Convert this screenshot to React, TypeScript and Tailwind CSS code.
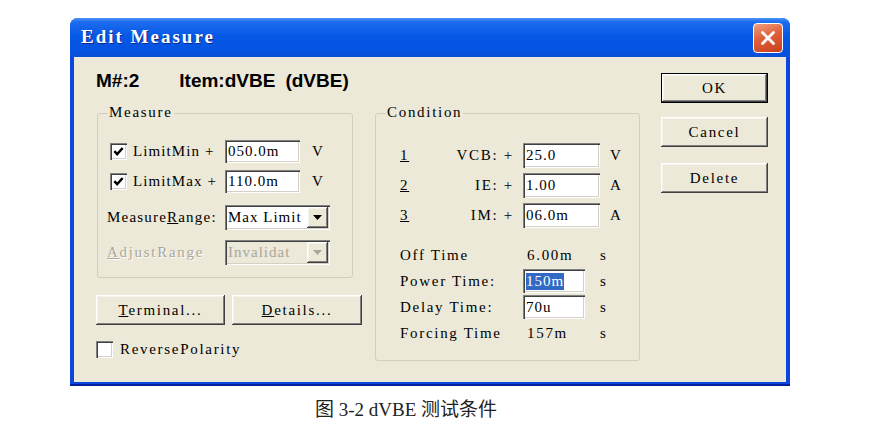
import type { ReactNode } from "react";

const DLG = "font-['Liberation_Serif','Times_New_Roman',serif] text-[15px] tracking-[1.7px]";
const SUNKEN =
  "shadow-[inset_1px_1px_0_#808080,inset_2px_2px_0_#404040,inset_-1px_-1px_0_#ffffff,inset_-2px_-2px_0_#d4d0c8]";
const RAISED =
  "shadow-[inset_-1px_-1px_0_#404040,inset_1px_1px_0_#ffffff,inset_-2px_-2px_0_#808080,inset_2px_2px_0_#f4f3ee]";

function CheckBox({ checked }: { checked?: boolean }) {
  return (
    <span className={`w-[17px] h-[17px] bg-white flex items-center justify-center shrink-0 ${SUNKEN}`}>
      {checked && (
        <svg width="11" height="11" viewBox="0 0 10 10">
          <path d="M1.2 4.6 L3.8 7.4 L8.8 1.8" stroke="#000" strokeWidth="2.2" fill="none" />
        </svg>
      )}
    </span>
  );
}

function Field({ value, className = "", selected }: { value: string; className?: string; selected?: boolean }) {
  return (
    <div className={`bg-white flex items-center pl-[3px] text-black tracking-[1px] ${SUNKEN} ${className}`}>
      {selected ? <span className="bg-[#316ac5] text-white leading-[17px]">{value}</span> : value}
    </div>
  );
}

function Combo({ value, disabled }: { value: string; disabled?: boolean }) {
  return (
    <div
      className={`w-[105px] h-[25px] flex items-center pl-[3px] pr-[2px] tracking-[1px] ${SUNKEN} ${
        disabled ? "bg-[#ece9d8] text-[#a9a79b]" : "bg-white text-black"
      }`}
    >
      <span className="flex-1 overflow-hidden whitespace-nowrap">{value}</span>
      <span className={`w-[21px] h-[21px] bg-[#ece9d8] flex items-center justify-center shrink-0 ${RAISED}`}>
        <svg width="9" height="5" viewBox="0 0 9 5">
          <polygon points="0,0 9,0 4.5,5" fill={disabled ? "#a9a79b" : "#000"} />
        </svg>
      </span>
    </div>
  );
}

function Button({ children, className = "", isDefault }: { children: ReactNode; className?: string; isDefault?: boolean }) {
  return (
    <div className={`h-[30px] ${isDefault ? "border border-black" : ""} ${className}`}>
      <div className={`w-full h-full bg-[#ece9d8] flex items-center justify-center text-black ${RAISED}`}>{children}</div>
    </div>
  );
}

function GroupBox({ title, className = "", children }: { title: string; className?: string; children: ReactNode }) {
  return (
    <div className={`border border-[#d0d0bf] rounded-[3px] flex flex-col ${className}`}>
      <div className="-mt-[11px] ml-[10px] w-fit px-[1px] bg-[#ece9d8] h-[18px] leading-[18px] text-black">{title}</div>
      {children}
    </div>
  );
}

export default function App() {
  return (
    <div className="w-[879px] h-[430px] bg-white pt-[18px] overflow-hidden">
      {/* Window */}
      <div className="ml-[70px] w-[720px] h-[368px] flex flex-col rounded-t-[8px] overflow-hidden bg-[#0b47dc] border-b-2 border-b-[#00209c]">
        {/* Title bar */}
        <div className="h-[39px] shrink-0 flex items-center pl-[11px] pr-[7px] bg-[linear-gradient(180deg,#4a95fa_0%,#1d6cf0_10%,#0658e6_45%,#0553e2_80%,#0a4fd8_100%)]">
          <span className="flex-1 font-['Liberation_Serif','Times_New_Roman',serif] font-bold text-[19px] tracking-[2px] text-white [text-shadow:1px_1px_0_#0a2a8a]">
            Edit Measure
          </span>
          <div className="w-[30px] h-[30px] rounded-[4px] border border-white bg-[linear-gradient(160deg,#f0a080_0%,#e0603a_45%,#c8401e_100%)] flex items-center justify-center">
            <svg width="16" height="16" viewBox="0 0 16 16">
              <path d="M2.5 2.5 L13.5 13.5 M13.5 2.5 L2.5 13.5" stroke="#fff" strokeWidth="2.8" strokeLinecap="round" />
            </svg>
          </div>
        </div>

        {/* Client area */}
        <div className={`flex-1 mx-[4px] mb-[2px] bg-[#ece9d8] flex ${DLG}`}>
          <div className="pl-[22px] pt-[13px] flex flex-col">
            <div className="h-[22px] leading-[22px] text-[19px] tracking-normal font-bold font-['Liberation_Sans',Arial,sans-serif] text-black whitespace-nowrap">
              <span>M#:2</span>
              <span className="ml-[40px]">Item:dVBE</span>
              <span className="ml-[10px]">(dVBE)</span>
            </div>

            <div className="mt-[21px] flex items-start">
              {/* Left column */}
              <div className="w-[266px] flex flex-col">
                <GroupBox title="Measure" className="ml-[1px] w-[256px] h-[165px]">
                  <div className="mt-[18px] h-[24px] flex items-center pl-[12px]">
                    <CheckBox checked />
                    <span className="ml-[6px] w-[92px] whitespace-pre tracking-[1.1px]">LimitMin +</span>
                    <Field value="050.0m" className="w-[75px] h-[23px]" />
                    <span className="ml-[12px]">V</span>
                  </div>
                  <div className="mt-[6px] h-[24px] flex items-center pl-[12px]">
                    <CheckBox checked />
                    <span className="ml-[6px] w-[92px] whitespace-pre tracking-[1.1px]">LimitMax +</span>
                    <Field value="110.0m" className="w-[75px] h-[23px]" />
                    <span className="ml-[12px]">V</span>
                  </div>
                  <div className="mt-[12px] h-[25px] flex items-center pl-[9px]">
                    <span className="w-[118px] whitespace-nowrap tracking-[1.2px]">
                      Measure<span className="underline">R</span>ange:
                    </span>
                    <Combo value="Max Limit" />
                  </div>
                  <div className="mt-[10px] h-[25px] flex items-center pl-[9px]">
                    <span className="w-[118px] text-[#a9a79b] [text-shadow:1px_1px_0_#ffffff]">
                      <span className="underline">A</span>djustRange
                    </span>
                    <Combo value="Invalidat" disabled />
                  </div>
                </GroupBox>

                <div className="mt-[17px] flex gap-[7px]">
                  <Button className="w-[129px]">
                    <span>
                      <span className="underline">T</span>erminal...
                    </span>
                  </Button>
                  <Button className="w-[130px]">
                    <span>
                      <span className="underline">D</span>etails...
                    </span>
                  </Button>
                </div>

                <div className="mt-[15px] h-[18px] flex items-center">
                  <CheckBox />
                  <span className="ml-[7px]">ReversePolarity</span>
                </div>
              </div>

              {/* Condition */}
              <GroupBox title="Condition" className="ml-[13px] w-[265px] h-[248px]">
                <div className="mt-[22px] flex flex-col gap-[5px]">
                  {[
                    ["1", "VCB: +", "25.0", "V"],
                    ["2", "IE: +", "1.00", "A"],
                    ["3", "IM: +", "06.0m", "A"],
                  ].map(([n, label, value, unit]) => (
                    <div key={n} className="h-[25px] flex items-center pl-[24px]">
                      <div className="w-[123px] flex">
                        <span className="underline">{n}</span>
                        <span className="flex-1 text-right pr-[9px] whitespace-pre">{label}</span>
                      </div>
                      <Field value={value} className="w-[77px] h-[25px]" />
                      <span className="ml-[10px]">{unit}</span>
                    </div>
                  ))}
                </div>

                <div className="mt-[15px] flex flex-col gap-[2px]">
                  <div className="h-[24px] flex items-center pl-[24px]">
                    <span className="w-[123px]">Off Time</span>
                    <span className="w-[77px] pl-[4px]">6.00m</span>
                    <span>s</span>
                  </div>
                  <div className="h-[24px] flex items-center pl-[24px]">
                    <span className="w-[123px]">Power Time:</span>
                    <div className="w-[77px]">
                      <Field value="150m" selected className="w-[62px] h-[24px]" />
                    </div>
                    <span>s</span>
                  </div>
                  <div className="h-[24px] flex items-center pl-[24px]">
                    <span className="w-[123px]">Delay Time:</span>
                    <div className="w-[77px]">
                      <Field value="70u" className="w-[62px] h-[24px]" />
                    </div>
                    <span>s</span>
                  </div>
                  <div className="h-[24px] flex items-center pl-[24px]">
                    <span className="w-[123px]">Forcing Time</span>
                    <span className="w-[77px] pl-[4px]">157m</span>
                    <span>s</span>
                  </div>
                </div>
              </GroupBox>
            </div>
          </div>

          {/* Right buttons */}
          <div className="ml-[21px] pt-[16px] flex flex-col">
            <Button isDefault className="w-[107px]">
              OK
            </Button>
            <Button className="w-[107px] mt-[14px]">Cancel</Button>
            <Button className="w-[107px] mt-[16px]">Delete</Button>
          </div>
        </div>
      </div>

      {/* Caption */}
      <div className="ml-[315px] mt-[11px] text-[19px] leading-[26px] text-[#222] font-['Liberation_Serif','Noto_Sans_CJK_SC',serif] whitespace-nowrap">
        图 3-2 dVBE 测试条件
      </div>
    </div>
  );
}
